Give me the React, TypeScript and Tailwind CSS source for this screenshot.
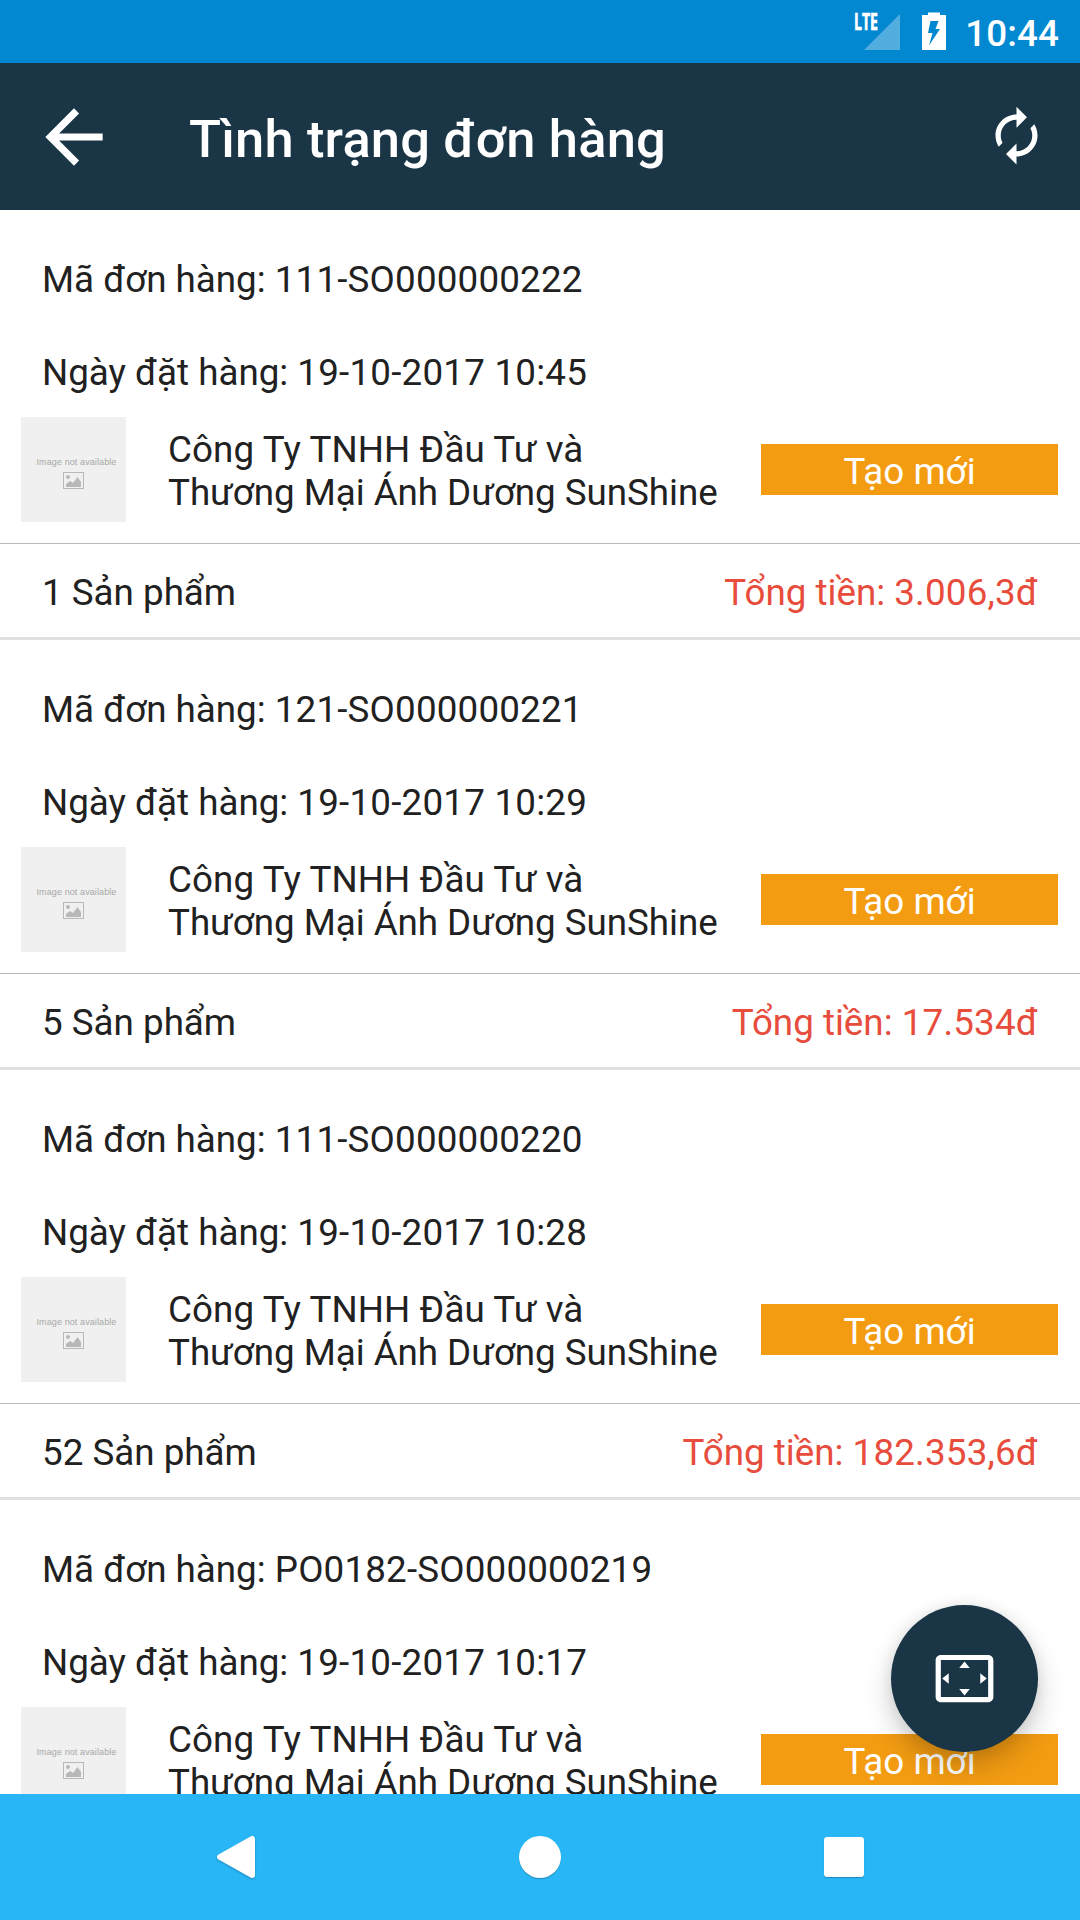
type Order = {
  code: string;
  date: string;
  summary?: { items: number; total: string };
};

const orders: Order[] = [
  { code: "111-SO000000222", date: "19-10-2017 10:45", summary: { items: 1, total: "3.006,3đ" } },
  { code: "121-SO000000221", date: "19-10-2017 10:29", summary: { items: 5, total: "17.534đ" } },
  { code: "111-SO000000220", date: "19-10-2017 10:28", summary: { items: 52, total: "182.353,6đ" } },
  { code: "PO0182-SO000000219", date: "19-10-2017 10:17" }
];

function StatusBar() {
  return (
    <div className="flex h-[63px] shrink-0 items-start justify-end bg-[#0288d1] pr-[21px] text-white">
      <svg className="mt-3 h-[38px] w-[47px] overflow-visible" viewBox="0 0 47 38">
        <path d="M47 2v36H11z" fill="#fff" fillOpacity="0.32" />
        <text
          x="1"
          y="18"
          textLength="24"
          lengthAdjust="spacingAndGlyphs"
          stroke="#fff"
          strokeWidth="0.7"
          className="fill-white font-['Open_Sans',sans-serif] text-[22.5px] font-bold"
        >
          LTE
        </text>
      </svg>
      <svg className="ml-[22px] mt-3 h-[38px] w-6" viewBox="0 0 24 38">
        <path
          fillRule="evenodd"
          fill="#fff"
          d="M6 .5h12V3h6v35H0V3h6zM8.500 9L6 21h4.500L7 33.500 18 17h-4.500L16.500 9z"
        />
      </svg>
      <span className="ml-[19px] mt-[12px] text-[36.75px] font-medium leading-[43px] tracking-[0.1px]">
        10:44
      </span>
    </div>
  );
}

function AppBar() {
  return (
    <header className="flex h-[147px] shrink-0 items-center bg-[#1a3545] text-white">
      <svg className="ml-[31px] h-[86px] w-[86px]" viewBox="0 0 24 24" fill="currentColor">
        <path d="M20 11H7.830l5.590-5.590L12 4l-8 8 8 8 1.410-1.410L7.830 13H20z" />
      </svg>
      <h1 className="ml-[72px] mt-[4px] flex-1 text-[52.5px] font-medium leading-[62px] tracking-[0.16px]">
        Tình trạng đơn hàng
      </h1>
      <svg className="mb-[2px] mr-8 h-[63px] w-[63px]" viewBox="0 0 24 24" fill="currentColor">
        <path d="M12 6v3l4-4-4-4v3c-4.420 0-8 3.580-8 8 0 1.570.46 3.030 1.240 4.260L6.700 14.800c-.45-.83-.7-1.790-.7-2.800 0-3.310 2.690-6 6-6zm6.760 1.740L17.300 9.200c.44.84.7 1.790.7 2.800 0 3.310-2.690 6-6 6v-3l-4 4 4 4v-3c4.420 0 8-3.580 8-8 0-1.570-.46-3.030-1.240-4.260z" />
      </svg>
    </header>
  );
}

function Thumbnail() {
  return (
    <div className="flex h-[105px] w-[105px] shrink-0 flex-col items-center bg-[#f0f0f0] pt-[39px]">
      <span className="ml-[6px] whitespace-nowrap font-['Liberation_Sans',sans-serif] text-[9px] leading-[12px] tracking-[0.1px] text-[#a8a8a8]">
        Image not available
      </span>
      <svg className="mt-1 h-[17px] w-[21px]" viewBox="0 0 21 17">
        <rect x="0.5" y="0.5" width="20" height="16" fill="none" stroke="#b8b8b8" />
        <circle cx="5" cy="5" r="2" fill="#b8b8b8" />
        <path d="M3 15v-3l4-3 3 2 4.500-6L18 10v5z" fill="#b8b8b8" />
      </svg>
    </div>
  );
}

function OrderCard({ order }: { order: Order }) {
  return (
    <article className="h-[430px] shrink-0 border-b-[3px] border-[#e0e0e0] pt-12">
      <p className="pl-[42px]">
        Mã đơn hàng: <span className="tracking-[0.18px]">{order.code}</span>
      </p>
      <p className="mt-[50px] pl-[42px]">
        Ngày đặt hàng: <span className="tracking-[0.22px]">{order.date}</span>
      </p>
      <div className="mt-[23px] flex h-[127px] items-start border-b border-[#b8b8b8] pl-[21px] pr-[22px]">
        <Thumbnail />
        <p className="ml-[42px] mt-[11px] whitespace-nowrap">
          <span className="tracking-[0.1px]">Công Ty TNHH Đầu Tư và</span>
          <br />
          <span className="tracking-[-0.04px]">Thương Mại Ánh Dương SunShine</span>
        </p>
        <span className="ml-auto mt-[27px] h-[51px] w-[297px] bg-[#f39c12] pt-[6px] text-center text-white">
          Tạo mới
        </span>
      </div>
      {order.summary && (
        <div className="flex justify-between px-[42px] pt-[27px]">
          <span>{order.summary.items} Sản phẩm</span>
          <span className="text-[#e74c3c]">
            Tổng tiền: <span className="tracking-[0.2px]">{order.summary.total}</span>
          </span>
        </div>
      )}
    </article>
  );
}

function NavBar() {
  return (
    <nav className="grid h-[126px] shrink-0 grid-cols-3 items-center justify-items-center bg-[#29b6f6] px-[84px]">
      <svg className="h-12 w-12 drop-shadow-[0_1px_1px_rgba(0,0,0,0.25)]" viewBox="0 0 48 48">
        <path
          d="M8 24L40 6v36z"
          fill="#fff"
          stroke="#fff"
          strokeWidth="6"
          strokeLinejoin="round"
        />
      </svg>
      <div className="h-[42px] w-[42px] rounded-full bg-white shadow-[0_1px_1px_rgba(0,0,0,0.25)]" />
      <div className="h-10 w-10 rounded-[3px] bg-white shadow-[0_1px_1px_rgba(0,0,0,0.25)]" />
    </nav>
  );
}

export default function App() {
  return (
    <div className="flex h-[1920px] w-[1080px] flex-col overflow-hidden bg-white font-[Roboto,sans-serif]">
      <StatusBar />
      <AppBar />
      <main className="relative flex min-h-0 flex-1 flex-col overflow-hidden text-[36.75px] leading-[43px] text-[#212121]">
        {orders.map((order) => (
          <OrderCard key={order.code} order={order} />
        ))}
        <button className="absolute bottom-[42px] right-[42px] flex h-[147px] w-[147px] items-center justify-center rounded-full bg-[#1a3545] text-white shadow-[0_14px_28px_rgba(0,0,0,0.2),0_0_14px_rgba(0,0,0,0.08)]">
          <svg className="h-[63px] w-[63px]" viewBox="0 0 24 24" fill="currentColor">
            <path d="M12.010 5.500L10 8h4l-1.990-2.500zM18 10v4l2.500-1.990L18 10zM6 10l-2.500 2.010L6 14v-4zm8 6h-4l2.010 2.500L14 16zm7-13H3c-1.100 0-2 .9-2 2v14c0 1.100.9 2 2 2h18c1.100 0 2-.9 2-2V5c0-1.100-.9-2-2-2zm0 16.010H3V4.990h18v14.020z" />
          </svg>
        </button>
      </main>
      <NavBar />
    </div>
  );
}
